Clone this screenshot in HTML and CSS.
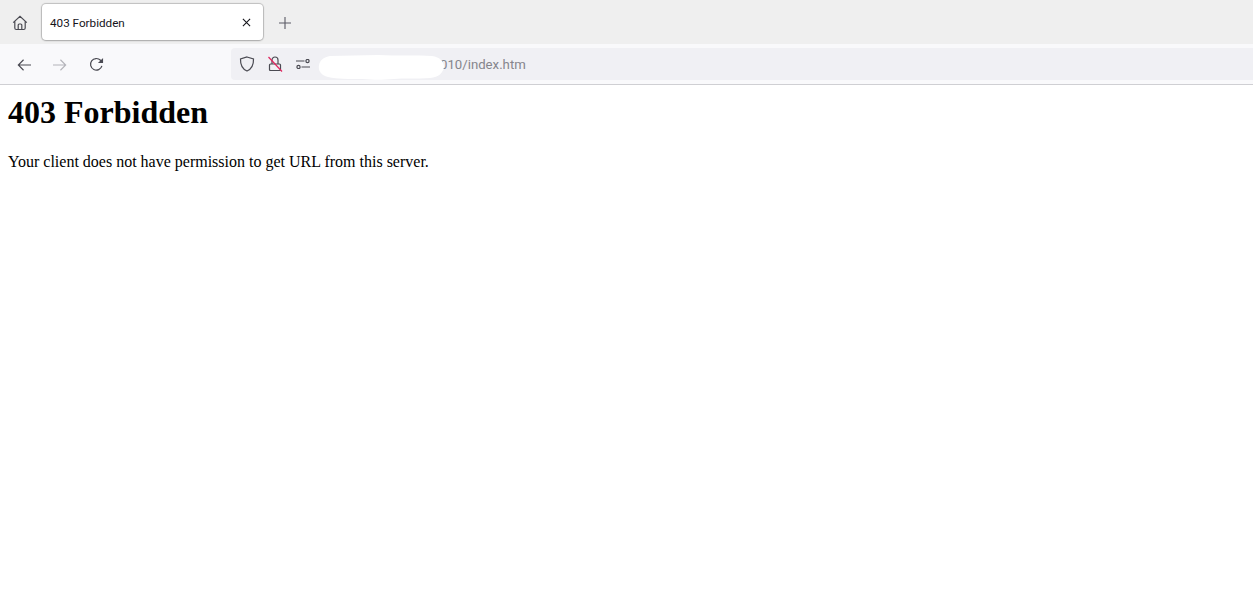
FILE: index.html
```html
<!DOCTYPE html>
<html lang="en">
<head>
<meta charset="utf-8">
<title>403 Forbidden</title>
<link rel="stylesheet" href="styles.css">
</head>
<body>
<header class="chrome">
  <div class="tabstrip">
    <button class="home" aria-label="Home">
      <svg viewBox="0 0 16 16" width="16" height="16"><path d="M1.200 7.600 8 1.400l6.800 6.200M2.800 6.400V13c0 .9.6 1.500 1.500 1.500h7.400c.9 0 1.500-.6 1.500-1.500V6.400M6.200 14.500V10c0-.6.4-1 1-1h1.600c.6 0 1 .4 1 1v4.500"/></svg>
    </button>
    <div class="tab">
      <span class="tab-title">403 Forbidden</span>
      <svg class="tab-close" viewBox="0 0 10 10" width="9" height="9"><path d="M1 1l8 8M9 1l-8 8"/></svg>
    </div>
    <button class="newtab" aria-label="New tab">
      <svg viewBox="0 0 14 14" width="12" height="12"><path d="M7 0v14M0 7h14"/></svg>
    </button>
  </div>
  <div class="navbar">
    <div class="nav-buttons">
      <svg class="nav-icon" viewBox="0 0 16 16" width="14" height="14"><path d="M16 8H1.500M7.500 2 1.500 8l6 6"/></svg>
      <svg class="nav-icon disabled" viewBox="0 0 16 16" width="14" height="14"><path d="M0 8h14.500M8.500 2l6 6-6 6"/></svg>
      <svg class="nav-icon reload" viewBox="0 0 16 16" width="15" height="15"><path d="M13.800 9.500A6.200 6.200 0 1 1 12.300 3.500L14.500 5.700"/><path class="fill" d="M15 1v5.500H9.500z"/></svg>
    </div>
    <div class="urlbar">
      <svg class="url-icon shield" viewBox="0 0 16 16" width="16" height="16"><path d="M8 1 14.500 3c.2 6.200-1.800 10-6.500 12C3.300 13 1.300 9.200 1.500 3z"/></svg>
      <svg class="url-icon lock" viewBox="0 0 16 16" width="16" height="16"><path d="M3.500 8h9c.6 0 1 .4 1 1v4.500c0 .6-.4 1-1 1h-9c-.6 0-1-.4-1-1V9c0-.6.4-1 1-1zM5 8V4a3 3 0 0 1 6 0v4"/><path class="slash" d="M1.500 1l13.500 14.500"/></svg>
      <svg class="url-icon perms" viewBox="0 0 14 10" width="14" height="10"><path d="M0 2h8.500M5.500 8H14"/><circle cx="11.500" cy="2" r="1.600"/><circle cx="2.500" cy="8" r="1.600"/></svg>
      <span class="url-text">010/index.htm</span>
      <svg class="redaction" viewBox="0 0 126 25" width="126" height="25"><path d="M12 1 60 0c20 1 40 0 54 1 8 1 12 6 12 11-1 6-5 10-14 11-14 1-26 0-36 1-12 1-20 1-32 0C30 24 20 24 10 22 3 20 0 16 1 10 2 5 6 2 12 1z"/></svg>
    </div>
  </div>
</header>
<main class="page">
  <h1>403 Forbidden</h1>
  <p>Your client does not have permission to get URL from this server.</p>
</main>
</body>
</html>
```
FILE: styles.css
```css
* { box-sizing: border-box; }
html, body { margin: 0; padding: 0; background: #fff; }
body { height: 600px; overflow: hidden; }

.chrome { display: flex; flex-direction: column; }

.tabstrip {
  height: 44px;
  background: #efefef;
  display: flex;
  align-items: center;
  padding-left: 12px;
}
button { border: 0; background: none; padding: 0; display: flex; }
svg path, svg circle { fill: none; stroke: #4a4a52; stroke-width: 1.200; }

.home { margin: 1px 14px 0 0; }

.tab {
  width: 221px;
  height: 36px;
  background: #fff;
  border-radius: 4px;
  box-shadow: 0 0 1px 1px rgba(0,0,0,.2), 0 1px 2px rgba(0,0,0,.12);
  display: flex;
  align-items: center;
  justify-content: space-between;
  padding: 0 12px 0 8px;
}
.tab-title { font: 11.700px/14px Roboto, "Open Sans", sans-serif; color: #15141a; margin-top: 1px; }
.tab-close path { stroke: #15141a; stroke-width: 1.200; }
.newtab { margin: 2px 0 0 16px; }
.newtab path { stroke: #5b5b66; stroke-width: 1.300; }

.navbar {
  height: 41px;
  background: #f9f9fb;
  border-bottom: 1px solid #cfcfd3;
  display: flex;
  align-items: flex-start;
  padding-top: 4px;
}
.nav-buttons {
  width: 231px;
  height: 32px;
  display: flex;
  align-items: center;
  gap: 22px;
  padding: 2px 0 0 17px;
}
.nav-icon path { stroke-width: 1.300; }
.nav-icon .fill { fill: #4a4a52; stroke: none; }
.nav-icon.disabled path { stroke: #b4b4ba; }
.nav-icon.reload { margin-top: -1px; }

.urlbar {
  flex: 1;
  height: 32px;
  background: #f0f0f4;
  border-radius: 4px 0 0 4px;
  display: flex;
  align-items: center;
  padding-left: 8px;
  position: relative;
}
.url-icon { flex: none; }
.lock { margin-left: 12px; }
.lock .slash { stroke: #e0245e; }
.perms { margin-left: 13px; margin-top: -1px; }
.url-text {
  margin: 2px 0 0 130px;
  font: 13.200px/16px Roboto, "Open Sans", sans-serif;
  color: #85858c;
}
.redaction {
  position: absolute;
  left: 87px;
  top: 7px;
}
.redaction path { fill: #fff; stroke: none; }

.page { padding: 0 8px; font-family: "Liberation Serif", "Times New Roman", serif; color: #000; }
h1 { margin: 9px 0 0; font-size: 32px; font-weight: 700; line-height: 37px; }
p { margin: 22px 0 0; font-size: 16px; line-height: 18px; }
```
